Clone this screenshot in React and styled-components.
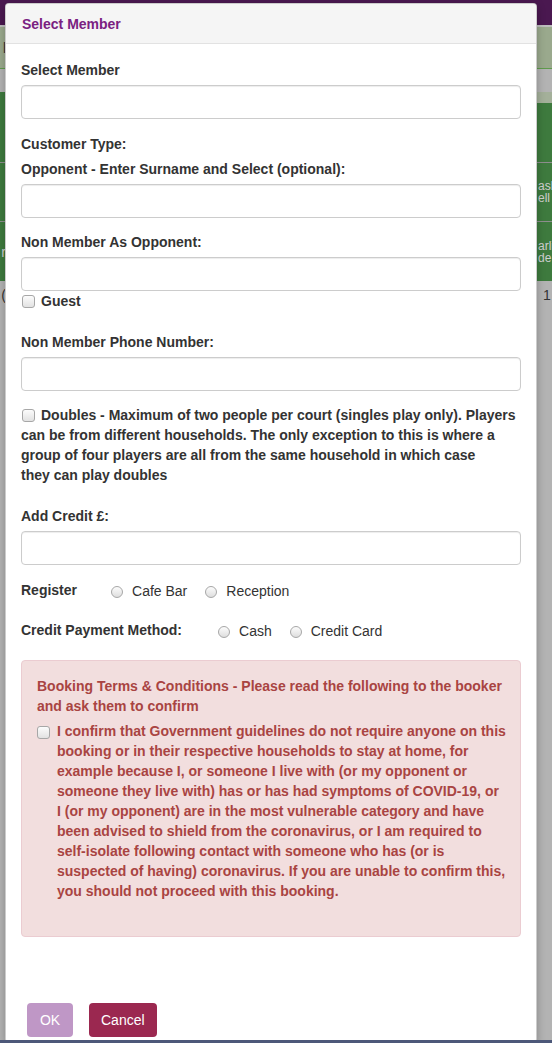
import React from "react";
import styled, { createGlobalStyle } from "styled-components";

const GlobalStyle = createGlobalStyle`
  html, body { margin: 0; padding: 0; }
  body {
    font-family: "Liberation Sans", Arial, sans-serif;
    font-size: 14px;
    line-height: 20px;
    color: #333;
    background: #b3b3b3;
    overflow: hidden;
  }
  * { box-sizing: border-box; }
`;

/* ---------- background page (behind the dialog) ---------- */

const Page = styled.div`
  position: relative;
  height: 1043px;
  overflow: hidden;
  background: #b3b3b3;
`;

const NavBar = styled.div`
  height: 27px;
  background: #4a1850;
  border-bottom: 2px solid #bdbdbd;
`;

const Grid = styled.div`
  display: grid;
  grid-template-columns: 6px 1fr 16px;
`;

const Cell = styled.div`
  height: ${(p) => p.$h}px;
  background: ${(p) => p.$bg};
  border-bottom: ${(p) => (p.$line ? `1px solid ${p.$line}` : "none")};
  color: ${(p) => p.$color || "#333"};
  font-size: ${(p) => p.$fs || 14}px;
  line-height: ${(p) => p.$lh || 16}px;
  overflow: hidden;
  white-space: nowrap;
  display: flex;
  flex-direction: column;
  justify-content: center;
  align-items: ${(p) => (p.$end ? "flex-end" : "flex-start")};
  padding-left: ${(p) => (p.$end ? 0 : p.$pl ?? 2)}px;
`;

const BottomStrip = styled.div`
  position: absolute;
  left: 0;
  right: 0;
  bottom: 0;
  height: 3px;
  background: #4d5879;
  z-index: 3;
`;

/* ---------- dialog ---------- */

const Modal = styled.div`
  position: absolute;
  top: 3px;
  left: 5px;
  width: 532px;
  height: 1040px;
  background: #fff;
  border: 1px solid rgba(0, 0, 0, 0.2);
  border-radius: 4px;
  box-shadow: 0 3px 9px rgba(0, 0, 0, 0.25);
  display: flex;
  flex-direction: column;
  z-index: 2;
`;

const Header = styled.div`
  height: 40px;
  flex: none;
  display: flex;
  align-items: center;
  padding: 0 16px;
  background: #f5f5f5;
  border-bottom: 1px solid #e2e2e2;
  border-radius: 4px 4px 0 0;
`;

const Title = styled.h4`
  margin: 0;
  font-size: 14px;
  font-weight: bold;
  color: #7a2181;
`;

const Body = styled.div`
  flex: 1;
  padding: 16px 15px 0 15px;
`;

const Group = styled.div`
  margin-bottom: ${(p) => p.$mb ?? 15}px;
`;

const Label = styled.label`
  display: block;
  font-weight: bold;
  color: #333;
  margin-bottom: 5px;
`;

const TextInput = styled.input.attrs({ type: "text" })`
  display: block;
  width: 100%;
  height: 34px;
  margin: 0;
  padding: 6px 12px;
  font: inherit;
  border: 1px solid #ccc;
  border-radius: 4px;
  box-shadow: inset 0 1px 1px rgba(0, 0, 0, 0.075);
  background: #fff;
`;

const Check = styled.input.attrs({ type: "checkbox" })`
  appearance: none;
  -webkit-appearance: none;
  flex: none;
  width: 13px;
  height: 13px;
  margin: 0;
  border: 1px solid #a7a7a7;
  border-radius: 3px;
  background: linear-gradient(#fcfcfc, #e2e2e2);
`;

const InlineCheck = styled(Check)`
  display: inline-block;
  vertical-align: -2px;
  margin: 0 6px 0 1px;
`;

const CheckRow = styled.label`
  display: flex;
  align-items: center;
  gap: 6px;
  padding-left: 1px;
  font-weight: bold;
`;

const Para = styled.div`
  font-weight: bold;
  white-space: nowrap;
`;

const Line = styled.span`
  display: block;
`;

const RadioRow = styled.div`
  display: flex;
  align-items: flex-start;
  height: 20px;
`;

const RowLabel = styled.span`
  font-weight: bold;
  line-height: 20px;
  margin-right: ${(p) => p.$gap}px;
`;

const Option = styled.label`
  display: flex;
  align-items: center;
  height: 20px;
  padding-top: 3px;
  line-height: 17px;
  margin-right: 18px;
  color: #333;
`;

const Radio = styled.input.attrs({ type: "radio" })`
  appearance: none;
  -webkit-appearance: none;
  flex: none;
  width: 12px;
  height: 12px;
  margin: 0 9px 0 0;
  border: 1px solid #a7a7a7;
  border-radius: 50%;
  background: linear-gradient(#fcfcfc, #dedede);
`;

const Alert = styled.div`
  border: 1px solid #ebccd1;
  background: #f2dede;
  color: #a94442;
  border-radius: 4px;
  padding: 15px;
  font-weight: bold;
`;

const AlertHeading = styled.div`
  white-space: nowrap;
  margin-bottom: 5px;
`;

const AlertCheck = styled.label`
  display: flex;
  align-items: flex-start;
  margin-bottom: 20px;
  white-space: nowrap;
`;

const AlertBox = styled(Check)`
  margin: 5px 7px 0 0;
`;

const Footer = styled.div`
  flex: none;
  display: flex;
  gap: 16px;
  padding: 0 15px 5px 21px;
`;

const Button = styled.button`
  height: 34px;
  min-width: 46px;
  padding: 6px 12px;
  font: inherit;
  font-size: 14px;
  color: #fff;
  border: none;
  border-radius: 4px;
  background: ${(p) => (p.$primary ? "#bf97c6" : "#9b2850")};
  cursor: pointer;
`;

const doublesLines = [
  "Doubles - Maximum of two people per court (singles play only). Players",
  "can be from different households. The only exception to this is where a",
  "group of four players are all from the same household in which case",
  "they can play doubles",
];

const headingLines = [
  "Booking Terms & Conditions - Please read the following to the booker",
  "and ask them to confirm",
];

const confirmLines = [
  "I confirm that Government guidelines do not require anyone on this",
  "booking or in their respective households to stay at home, for",
  "example because I, or someone I live with (or my opponent or",
  "someone they live with) has or has had symptoms of COVID-19, or",
  "I (or my opponent) are in the most vulnerable category and have",
  "been advised to shield from the coronavirus, or I am required to",
  "self-isolate following contact with someone who has (or is",
  "suspected of having) coronavirus. If you are unable to confirm this,",
  "you should not proceed with this booking.",
];

const GREEN = "#3e7a3e";
const OLIVE = "#9aa98d";
const GREY = "#b3b3b3";
const SEP = "#8e8e8e";

export default function App() {
  return (
    <Page>
      <GlobalStyle />
      <NavBar />
      <Grid>
        <Cell $h={42} $bg={OLIVE} $line="#5f9b4c" $end>l</Cell>
        <Cell $h={42} $bg={OLIVE} $line="#5f9b4c" />
        <Cell $h={42} $bg={OLIVE} $line="#5f9b4c" />

        <Cell $h={23} $bg={GREY} />
        <Cell $h={23} $bg={GREY} />
        <Cell $h={23} $bg={GREY} />

        <Cell $h={11} $bg={GREEN} />
        <Cell $h={11} $bg={OLIVE} />
        <Cell $h={11} $bg="#a4b09a" />

        <Cell $h={60} $bg={GREEN} $line={SEP} />
        <Cell $h={60} $bg={GREEN} $line={SEP} />
        <Cell $h={60} $bg={GREEN} $line={SEP} />

        <Cell $h={59} $bg={GREEN} $line={SEP} />
        <Cell $h={59} $bg={GREEN} $line={SEP} />
        <Cell $h={59} $bg={GREEN} $line={SEP} $color="#cfcfcf" $fs={12} $lh={12}>
          <span>ash</span>
          <span>ell</span>
        </Cell>

        <Cell $h={59} $bg={GREEN} $color="#cfcfcf" $end>r</Cell>
        <Cell $h={59} $bg={GREEN} />
        <Cell $h={59} $bg={GREEN} $color="#cfcfcf" $fs={12} $lh={12}>
          <span>arli</span>
          <span>de</span>
        </Cell>

        <Cell $h={28} $bg={GREY} $end>(</Cell>
        <Cell $h={28} $bg={GREY} />
        <Cell $h={28} $bg={GREY} $pl={7}>1</Cell>
      </Grid>

      <Modal>
        <Header>
          <Title>Select Member</Title>
        </Header>
        <Body>
          <Group>
            <Label>Select Member</Label>
            <TextInput />
          </Group>

          <Group $mb={14}>
            <Label>Customer Type:</Label>
            <Label>Opponent - Enter Surname and Select (optional):</Label>
            <TextInput />
          </Group>

          <Group $mb={21}>
            <Label>Non Member As Opponent:</Label>
            <TextInput />
            <CheckRow>
              <Check />
              Guest
            </CheckRow>
          </Group>

          <Group $mb={14}>
            <Label>Non Member Phone Number:</Label>
            <TextInput />
          </Group>

          <Group $mb={21}>
            <Para>
              {doublesLines.map((l, i) => (
                <Line key={i}>
                  {i === 0 && <InlineCheck />}
                  {l}
                </Line>
              ))}
            </Para>
          </Group>

          <Group $mb={15}>
            <Label>Add Credit £:</Label>
            <TextInput />
          </Group>

          <Group $mb={20}>
            <RadioRow>
              <RowLabel $gap={34}>Register</RowLabel>
              <Option>
                <Radio name="register" />
                Cafe Bar
              </Option>
              <Option>
                <Radio name="register" />
                Reception
              </Option>
            </RadioRow>
          </Group>

          <Group $mb={20}>
            <RadioRow>
              <RowLabel $gap={36}>Credit Payment Method:</RowLabel>
              <Option>
                <Radio name="pay" />
                Cash
              </Option>
              <Option>
                <Radio name="pay" />
                Credit Card
              </Option>
            </RadioRow>
          </Group>

          <Alert>
            <AlertHeading>
              {headingLines.map((l, i) => (
                <Line key={i}>{l}</Line>
              ))}
            </AlertHeading>
            <AlertCheck>
              <AlertBox />
              <div>
                {confirmLines.map((l, i) => (
                  <Line key={i}>{l}</Line>
                ))}
              </div>
            </AlertCheck>
          </Alert>
        </Body>
        <Footer>
          <Button $primary>OK</Button>
          <Button>Cancel</Button>
        </Footer>
      </Modal>
      <BottomStrip />
    </Page>
  );
}
